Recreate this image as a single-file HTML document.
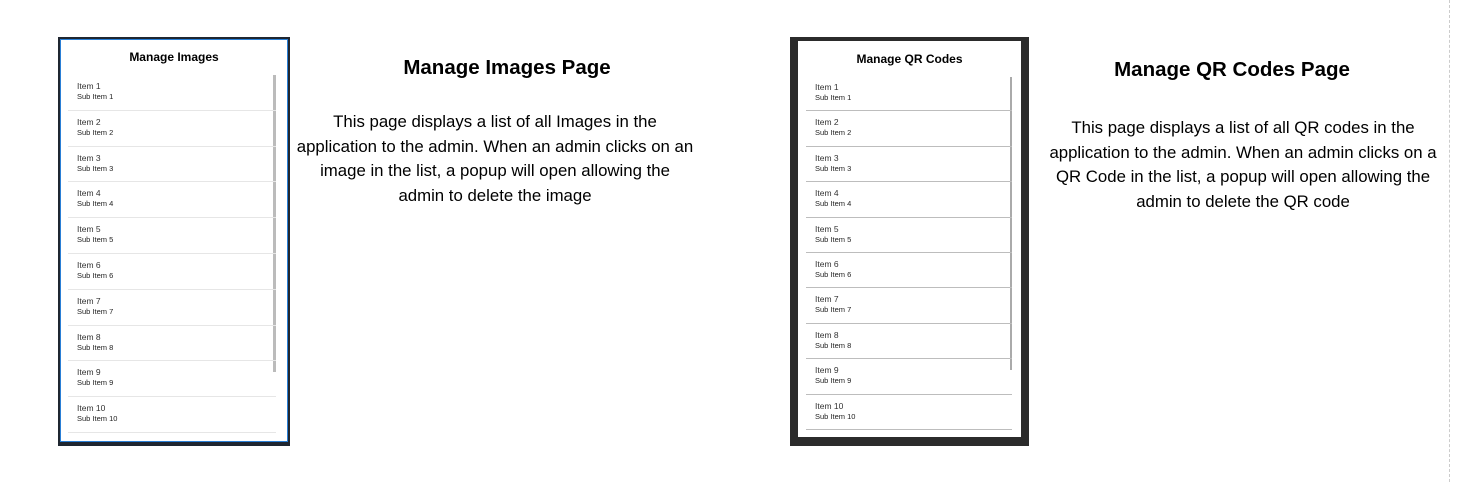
<!DOCTYPE html>
<html><head><style>
*{margin:0;padding:0;box-sizing:border-box}
body{width:1462px;height:482px;background:#fff;position:relative;font-family:"Liberation Sans",Arial,sans-serif;overflow:hidden}
.abs{position:absolute}
.item{position:absolute;font-size:8px;color:#333}
.item .t{font-size:8.5px;color:#333}
.item .s{font-size:7.5px;color:#222;margin-top:1px}
h2{position:absolute;font-size:20.5px;font-weight:bold;text-align:center;color:#000}
p.d{position:absolute;font-size:16.8px;line-height:24.6px;text-align:center;color:#000;white-space:nowrap}
</style></head><body>
<div class="abs" style="left:58px;top:37px;width:232px;height:409px;background:#1f2630"></div>
<div class="abs" style="left:60px;top:39px;width:228px;height:403px;background:#2a7fd6"></div>
<div class="abs" style="left:61px;top:40px;width:226px;height:401px;background:#fff"></div>
<div class="abs" style="left:61px;top:50px;width:226px;text-align:center;font-size:12px;font-weight:bold">Manage Images</div>
<div class="abs" style="left:273px;top:75px;width:3px;height:297px;background:#bbb"></div>
<div id="L"></div>
<div class="abs" style="left:790px;top:37px;width:239px;height:409px;background:#2b2b2b"></div>
<div class="abs" style="left:798px;top:41px;width:223px;height:396px;background:#fff"></div>
<div class="abs" style="left:798px;top:52px;width:223px;text-align:center;font-size:12px;font-weight:bold">Manage QR Codes</div>
<div class="abs" style="left:1010px;top:77px;width:2px;height:293px;background:#aaa"></div>
<div id="R"></div>
<h2 style="left:307px;top:56px;width:400px">Manage Images Page</h2>
<p class="d" style="left:245px;top:110px;width:500px">This page displays a list of all Images in the<br>application to the admin. When an admin clicks on an<br>image in the list, a popup will open allowing the<br>admin to delete the image</p>
<h2 style="left:1032px;top:58px;width:400px">Manage QR Codes Page</h2>
<p class="d" style="left:993px;top:116px;width:500px">This page displays a list of all QR codes in the<br>application to the admin. When an admin clicks on a<br>QR Code in the list, a popup will open allowing the<br>admin to delete the QR code</p>
<div class="abs" style="left:1449px;top:0;width:0;height:482px;border-left:1px dashed #ccc"></div>
<script>
function build(id,x,y0,step,w,lc){var h='';for(var i=1;i<=10;i++){var y=y0+(i-1)*step;
h+='<div class="item" style="left:'+(x+9)+'px;top:'+(y+6)+'px"><div class="t">Item '+i+'</div><div class="s">Sub Item '+i+'</div></div>';
h+='<div class="abs" style="left:'+x+'px;top:'+(y+step-1)+'px;width:'+w+'px;height:1px;background:'+lc+'"></div>';}
document.getElementById(id).outerHTML=h;}
build('L',68,75,35.8,208,'#e6e6e6');
build('R',806,76,35.4,206,'#bdbdbd');
</script>
</body></html>
